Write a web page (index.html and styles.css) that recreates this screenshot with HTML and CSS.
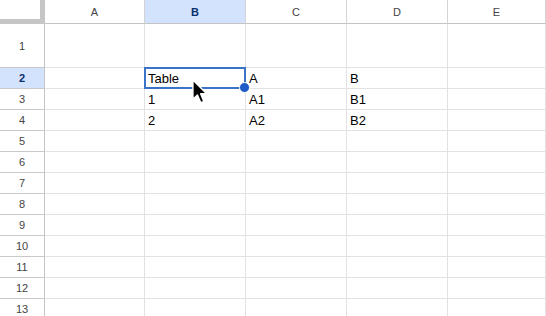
FILE: index.html
```html
<!DOCTYPE html>
<html lang="en">
<head>
    <meta charset="UTF-8">
    <title>Sheet</title>
    <link rel="stylesheet" href="styles.css">
</head>
<body>
    <div class="sheet">
        <div class="corner"></div>
        <div class="col-head">A</div>
        <div class="col-head active">B</div>
        <div class="col-head">C</div>
        <div class="col-head">D</div>
        <div class="col-head">E</div>

        <div class="row-head">1</div>
        <div class="cell"></div><div class="cell"></div><div class="cell"></div><div class="cell"></div><div class="cell"></div>

        <div class="row-head active">2</div>
        <div class="cell"></div>
        <div class="cell selected">Table
            <div class="sel-box"><span class="handle"></span></div>
            <svg class="pointer" width="18" height="27" viewBox="0 0 14 21">
                <path d="M1.5 1.5 L1.5 16.5 L5 13.2 L7.6 19.2 L10 18.2 L7.5 12.3 L12.2 12.3 Z" fill="#000" stroke="#fff" stroke-width="1.1" stroke-linejoin="round"/>
            </svg>
        </div>
        <div class="cell">A</div><div class="cell">B</div><div class="cell"></div>

        <div class="row-head">3</div>
        <div class="cell"></div><div class="cell">1</div><div class="cell">A1</div><div class="cell">B1</div><div class="cell"></div>

        <div class="row-head">4</div>
        <div class="cell"></div><div class="cell">2</div><div class="cell">A2</div><div class="cell">B2</div><div class="cell"></div>

        <div class="row-head">5</div>
        <div class="cell"></div><div class="cell"></div><div class="cell"></div><div class="cell"></div><div class="cell"></div>
        <div class="row-head">6</div>
        <div class="cell"></div><div class="cell"></div><div class="cell"></div><div class="cell"></div><div class="cell"></div>
        <div class="row-head">7</div>
        <div class="cell"></div><div class="cell"></div><div class="cell"></div><div class="cell"></div><div class="cell"></div>
        <div class="row-head">8</div>
        <div class="cell"></div><div class="cell"></div><div class="cell"></div><div class="cell"></div><div class="cell"></div>
        <div class="row-head">9</div>
        <div class="cell"></div><div class="cell"></div><div class="cell"></div><div class="cell"></div><div class="cell"></div>
        <div class="row-head">10</div>
        <div class="cell"></div><div class="cell"></div><div class="cell"></div><div class="cell"></div><div class="cell"></div>
        <div class="row-head">11</div>
        <div class="cell"></div><div class="cell"></div><div class="cell"></div><div class="cell"></div><div class="cell"></div>
        <div class="row-head">12</div>
        <div class="cell"></div><div class="cell"></div><div class="cell"></div><div class="cell"></div><div class="cell"></div>
        <div class="row-head">13</div>
        <div class="cell"></div><div class="cell"></div><div class="cell"></div><div class="cell"></div><div class="cell"></div>
    </div>
</body>
</html>
```

FILE: styles.css
```css
html, body {
    margin: 0;
    padding: 0;
    background-color: #fff;
    overflow: hidden;
}
body {
    font-family: "Liberation Sans", Arial, sans-serif;
    width: 546px;
    height: 316px;
}
.sheet {
    display: grid;
    grid-template-columns: 45px 100px 101px 101px 101px 1fr;
    grid-template-rows: 24px 44px repeat(12, 21px);
}
.sheet > div {
    box-sizing: border-box;
    border-right: 1px solid #e2e2e2;
    border-bottom: 1px solid #e2e2e2;
}
.corner {
    background-color: #fff;
    border-right: 5px solid #c6c6c6 !important;
    border-bottom: 5px solid #c6c6c6 !important;
}
.col-head {
    display: flex;
    align-items: center;
    justify-content: center;
    font-size: 11px;
    color: #444;
    border-right-color: #d4d4d4 !important;
    border-bottom-color: #c4c4c4 !important;
}
.row-head {
    display: flex;
    align-items: center;
    justify-content: center;
    font-size: 11px;
    color: #444;
    border-right-color: #c4c4c4 !important;
    border-bottom-color: #c9c9c9 !important;
}
.col-head.active, .row-head.active {
    background-color: #d3e3fd;
    color: #0b2f6b;
    font-weight: bold;
}
.cell {
    display: flex;
    align-items: flex-end;
    padding: 0 0 2px 3px;
    font-size: 13px;
    color: #000;
    white-space: nowrap;
}
.selected {
    position: relative;
}
.sel-box {
    position: absolute;
    left: -1px;
    top: -1px;
    right: -1px;
    bottom: -1px;
    border: 2px solid #3b73c7;
}
.handle {
    position: absolute;
    right: -6px;
    bottom: -6px;
    width: 9px;
    height: 9px;
    border-radius: 50%;
    background-color: #1f5bc6;
    border: 1px solid #fff;
}
.pointer {
    position: absolute;
    left: 46px;
    top: 10px;
}
```
